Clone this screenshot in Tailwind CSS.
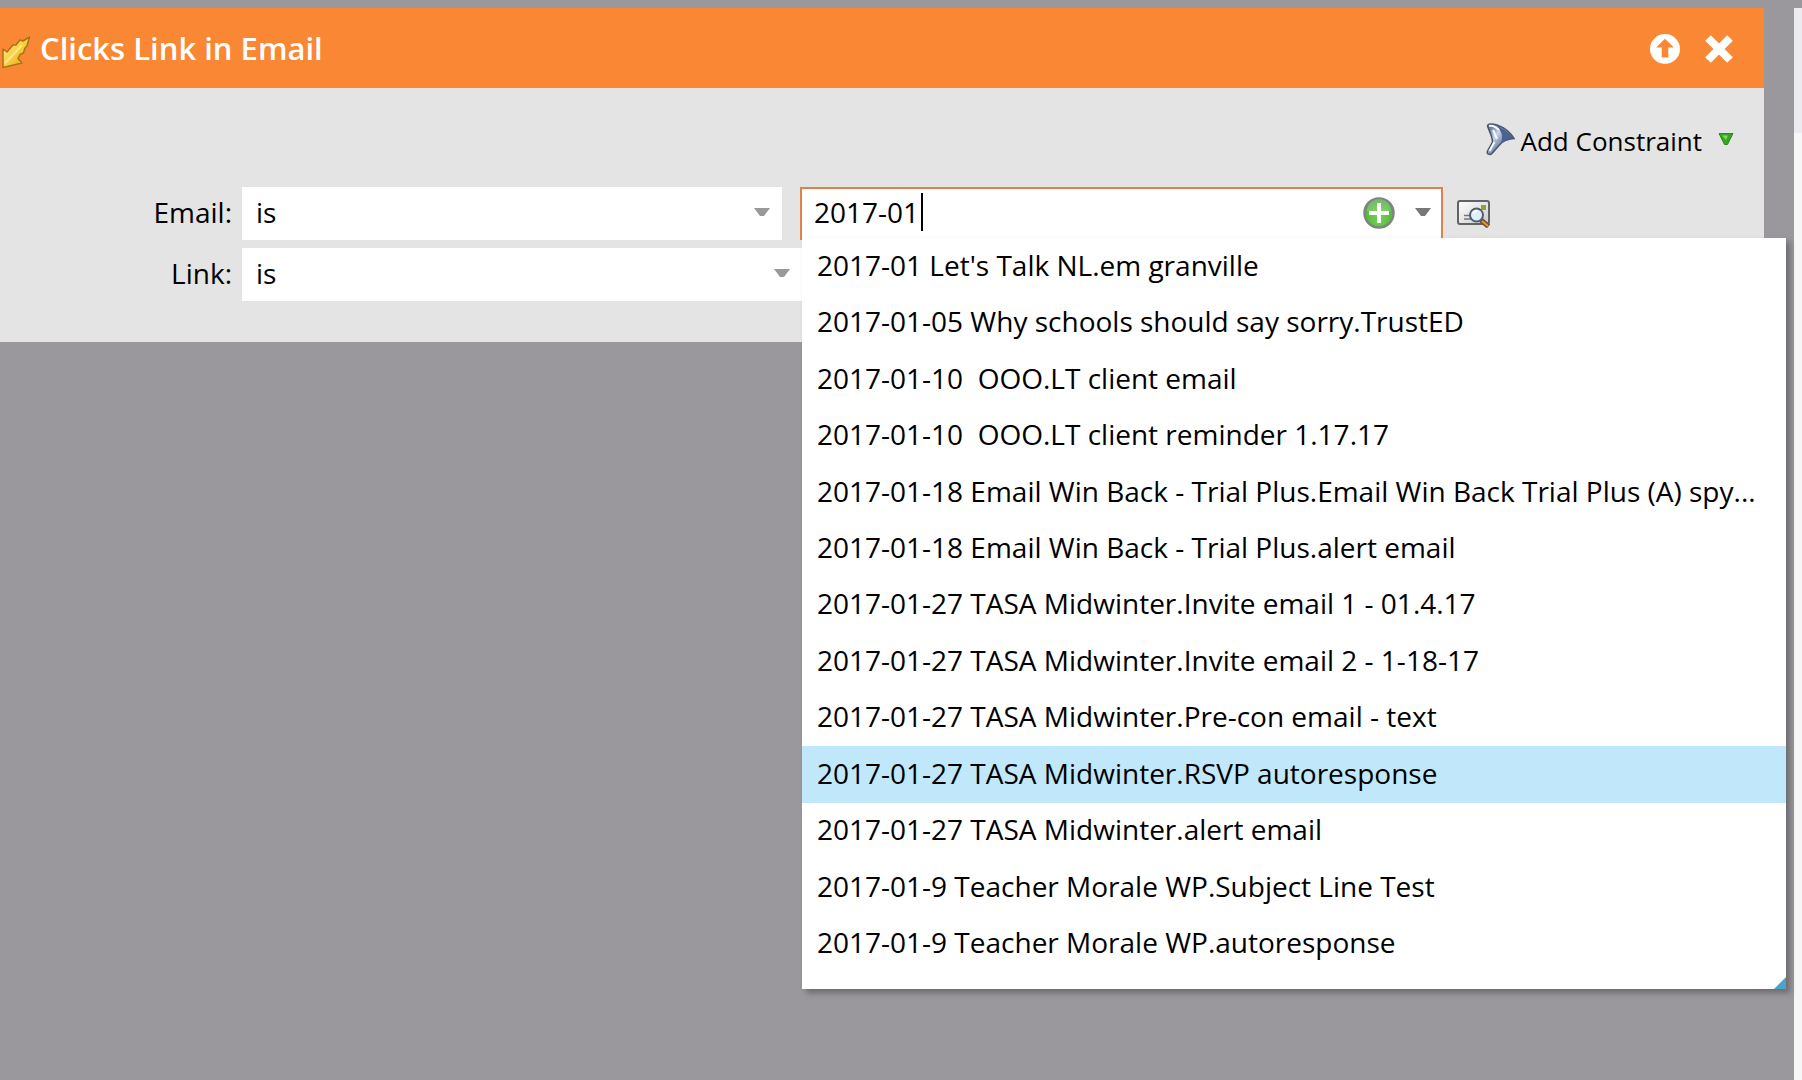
<!DOCTYPE html>
<html lang="en">
<head>
    <meta charset="UTF-8">
    <meta name="viewport" content="width=device-width, initial-scale=1.0">
    <title>Clicks Link in Email</title>
    <script src="https://cdn.jsdelivr.net/npm/@tailwindcss/browser@4"></script>
</head>
<body class="flex min-h-screen overflow-x-hidden bg-[#9a989d] pt-2 font-['Open_Sans','Noto_Sans',sans-serif] text-[28px] leading-9 text-black">

    <main class="flex-1">
        <section class="mr-[30px] bg-[#e4e4e4]">
            <header class="flex h-20 items-center bg-[#fa8734] pr-[30px] text-white">
                <svg class="mt-2 h-[34px] w-8" viewBox="0 0 32 34" aria-hidden="true">
                    <defs>
                        <linearGradient id="gold" x1="0" y1="0" x2="1" y2="1">
                            <stop offset="0" stop-color="#fff09a" />
                            <stop offset=".5" stop-color="#f8cf3e" />
                            <stop offset="1" stop-color="#d89a1c" />
                        </linearGradient>
                    </defs>
                    <path d="M3 32.500V14l4 3 6-7h3l4-5 3 1 6.500-4L27 11l-2 2-1.500 5-3.500 1.500-2 4 4 4.500z" fill="url(#gold)" stroke="#a8741a" stroke-width="1.500" stroke-linejoin="round" />
                    <path d="M5 28l9-9 8-9" fill="none" stroke="#fff0a0" stroke-width="2" opacity=".7" />
                </svg>
                <h1 class="ml-2 flex-1 text-[31px] font-semibold">Clicks Link in Email</h1>
                <div class="flex items-center gap-6 pt-[2px]">
                    <button type="button" aria-label="Collapse">
                        <svg class="h-[30px] w-[30px]" viewBox="0 0 32 32">
                            <circle cx="16" cy="16" r="16" fill="#fff" />
                            <path d="M16 5l9.500 9.500H19.500V25h-7V14.500H6.500z" fill="#fa8734" />
                        </svg>
                    </button>
                    <button type="button" aria-label="Close">
                        <svg class="h-[30px] w-[30px]" viewBox="0 0 30 30">
                            <path d="M4 4l22 22M26 4L4 26" stroke="#fff" stroke-width="8" />
                        </svg>
                    </button>
                </div>
            </header>

            <div class="flex justify-end pt-[35px] pr-[26px]">
                <button type="button" class="flex items-center text-[26px] leading-9">
                    <svg class="mr-[3px] h-9 w-9" viewBox="0 0 36 36" aria-hidden="true">
                        <defs>
                            <linearGradient id="steel" x1="0" y1="0" x2="1" y2="1">
                                <stop offset="0" stop-color="#3f4d68" />
                                <stop offset=".35" stop-color="#c9d5e6" />
                                <stop offset=".6" stop-color="#6b7fa3" />
                                <stop offset="1" stop-color="#26375a" />
                            </linearGradient>
                        </defs>
                        <path d="M5.500 3C6 .5 10 .5 15 2c7 2.500 13 7 17 13.500-6 .5-12 3-15 7L10 30.500c-2 2-6 .5-4.500-2.500L10.500 19C10.500 13 7 8 5.500 3z" fill="url(#steel)" stroke="#4b576c" stroke-width="1.500" />
                        <path d="M14 2.500c7 2.500 13 7 17 13-5 .5-9 2-12 4.500C22 13 19 7 14 2.500z" fill="#4a6292" />
                        <path d="M7 3c3-1 7 1 10 4M11 7l4 9M12.500 19L7.500 28" fill="none" stroke="#f4f8ff" stroke-width="2" />
                    </svg>
                    <span>Add Constraint</span>
                    <svg class="mb-[5px] mr-1 ml-4 h-3 w-4" viewBox="0 0 16 12" aria-hidden="true">
                        <path d="M1 .5h14L9.500 11.500h-3z" fill="#36a51f" stroke="#2f8720" />
                        <path d="M4 2.500h6L8 7z" fill="#83d65c" />
                    </svg>
                </button>
            </div>

            <form class="grid grid-cols-[242px_minmax(0,540fr)_minmax(0,661fr)_minmax(0,321fr)] gap-y-2 pt-7 pb-[41px]">
                <label for="email-op" class="flex h-[53px] items-center justify-end pr-[10px] pb-1">Email:</label>
                <div class="relative">
                    <select id="email-op" class="h-[53px] w-full appearance-none bg-white px-[14px] pb-1 outline-none">
                        <option>is</option>
                        <option>is not</option>
                    </select>
                    <svg class="pointer-events-none absolute top-[21px] right-3 h-2 w-4" viewBox="0 0 16 8"><path d="M0 0h16L10 8H6z" fill="#999" /></svg>
                </div>
                <div class="relative ml-[18px] h-[53px]">
                    <input id="email-value" type="text" value="2017-01" aria-label="Email name" autocomplete="off" class="h-[53px] w-full border-2 border-[#dd824b] bg-white px-3 pb-1 outline-none">
                    <span class="absolute top-[6px] left-[121px] h-[38px] w-[2px] bg-black"></span>
                    <button type="button" aria-label="Add value" class="absolute top-[10px] right-12 h-8 w-8">
                        <svg class="h-8 w-8" viewBox="0 0 32 32">
                            <defs>
                                <radialGradient id="green" cx=".5" cy=".7" r=".7">
                                    <stop offset="0" stop-color="#72d64e" />
                                    <stop offset="1" stop-color="#4aa83c" />
                                </radialGradient>
                            </defs>
                            <circle cx="16" cy="16" r="14.500" fill="url(#green)" stroke="#7b877d" stroke-width="2.500" />
                            <path d="M4 14a12 12 0 0 1 24 0q-12 4-24 0z" fill="#fff" opacity=".2" />
                            <path d="M16 6v20M6 16h20" stroke="#fff" stroke-width="4" />
                        </svg>
                    </button>
                    <button type="button" aria-label="Show list" class="absolute top-[21px] right-3 flex h-2 w-4">
                        <svg class="h-2 w-4" viewBox="0 0 16 8"><path d="M0 0h16L10 8H6z" fill="#777" /></svg>
                    </button>

                    <!-- suggestions -->
                    <div class="absolute top-[51px] left-[2px] z-10 w-[984px] bg-white pb-[17px] shadow-[4px_4px_6px_rgba(0,0,0,0.3)]">
                        <ul id="suggestions" role="listbox" aria-label="Matching emails" class="grid h-[734px] auto-rows-fr"></ul>
                        <svg class="absolute right-0 bottom-0 h-3 w-3" viewBox="0 0 12 12"><path d="M12 0v12H0z" fill="#4ba3cb" /></svg>
                    </div>
                </div>
                <div class="ml-[14px] flex items-center">
                    <button type="button" aria-label="Preview email">
                        <svg class="h-7 w-[34px]" viewBox="0 0 34 28">
                            <defs>
                                <linearGradient id="paper" x1="0" y1="0" x2="1" y2="1">
                                    <stop offset="0" stop-color="#fff" />
                                    <stop offset="1" stop-color="#ccc" />
                                </linearGradient>
                            </defs>
                            <rect x="1" y="1" width="31" height="23" rx="2" fill="url(#paper)" stroke="#636363" stroke-width="2" />
                            <path d="M24 5h5v5h-5z" fill="#9d9a37" />
                            <path d="M7 15.500h7M7 19h8" stroke="#777" stroke-width="1.500" />
                            <path d="M24 20l7.500 6.500" stroke="#795026" stroke-width="5" />
                            <path d="M25 21l6 5" stroke="#d89a4d" stroke-width="2" />
                            <circle cx="19.500" cy="15" r="6.500" fill="#dff0fc" stroke="#515e6b" stroke-width="2" />
                            <path d="M16 14a4 4 0 0 1 4-3" fill="none" stroke="#fff" stroke-width="2" />
                        </svg>
                    </button>
                </div>

                <label for="link-op" class="col-start-1 flex h-[53px] items-center justify-end pr-[10px] pb-1">Link:</label>
                <div class="relative mr-[-20px]">
                    <select id="link-op" class="h-[53px] w-full appearance-none bg-white px-[14px] pb-1 outline-none">
                        <option>is</option>
                        <option>is not</option>
                    </select>
                    <svg class="pointer-events-none absolute top-[21px] right-3 h-2 w-4" viewBox="0 0 16 8"><path d="M0 0h16L10 8H6z" fill="#999" /></svg>
                </div>
            </form>
        </section>
    </main>

    <aside class="w-2 bg-[#f7f7f8]">
        <div class="h-[125px] bg-[#ebebf0]"></div>
    </aside>

    <script>
        const emails = [
            "2017-01 Let's Talk NL.em granville",
            '2017-01-05 Why schools should say sorry.TrustED',
            '2017-01-10  OOO.LT client email',
            '2017-01-10  OOO.LT client reminder 1.17.17',
            '2017-01-18 Email Win Back - Trial Plus.Email Win Back Trial Plus (A) spy...',
            '2017-01-18 Email Win Back - Trial Plus.alert email',
            '2017-01-27 TASA Midwinter.Invite email 1 - 01.4.17',
            '2017-01-27 TASA Midwinter.Invite email 2 - 1-18-17',
            '2017-01-27 TASA Midwinter.Pre-con email - text',
            '2017-01-27 TASA Midwinter.RSVP autoresponse',
            '2017-01-27 TASA Midwinter.alert email',
            '2017-01-9 Teacher Morale WP.Subject Line Test',
            '2017-01-9 Teacher Morale WP.autoresponse'
        ];
        const selected = 9;
        const list = document.getElementById('suggestions');

        emails.forEach((name, i) => {
            const item = document.createElement('li');
            item.setAttribute('role', 'option');
            item.setAttribute('aria-selected', i === selected);
            item.className = 'flex cursor-pointer items-center whitespace-pre px-[15px] pb-[3px] hover:bg-[#c1e7fa] aria-selected:bg-[#c1e7fa]';
            item.textContent = name;
            item.addEventListener('click', () => {
                document.getElementById('email-value').value = name;
            });
            list.appendChild(item);
        });
    </script>
</body>
</html>
